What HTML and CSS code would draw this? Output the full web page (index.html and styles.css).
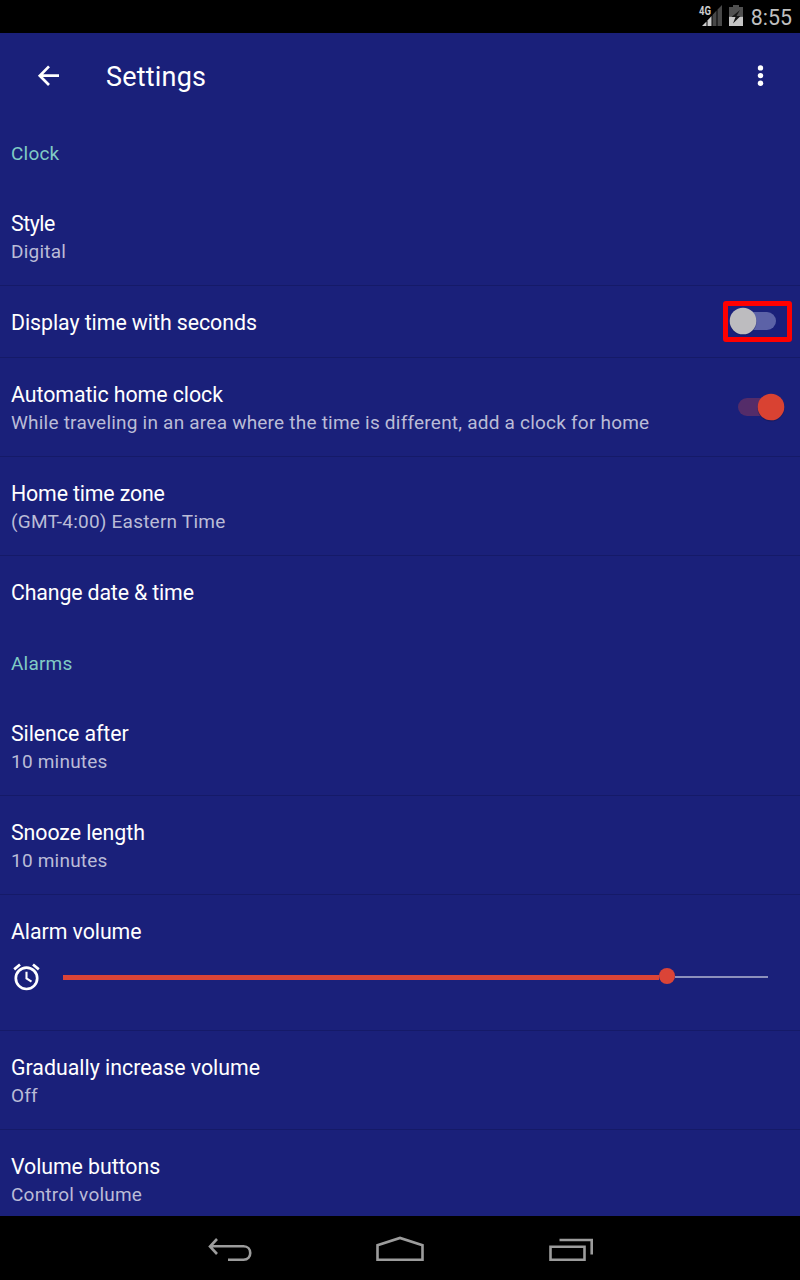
FILE: index.html
```
<!DOCTYPE html>
<html lang="en">
<head>
<meta charset="utf-8">
<title>Settings</title>
<link rel="stylesheet" href="styles.css">
</head>
<body>
<div class="screen">
  <div class="status">
    <svg class="signal" width="26" height="24" viewBox="0 0 26 24">
      <path d="M4 22L8.500 17.500V22z" fill="#ccc"/><path d="M9.500 16.500L13.500 12V22h-4z" fill="#ccc"/>
      <path d="M14.500 11L18.500 6.500V22h-4zM19.500 5.500L24 1v21h-4.500z" fill="#484848"/>
      <text x="1" y="11" class="net" textLength="12" lengthAdjust="spacingAndGlyphs">4G</text>
    </svg>
    <svg class="battery" width="14" height="21" viewBox="0 0 14 21">
      <path d="M4 0h6v2h4v9H0V2h4z" fill="#505050"/><path d="M0 11.500h14v9.500H0z" fill="#c6c6c6"/>
      <path d="M11 5L2.500 12h4L4 18.500 11.500 11h-4z" fill="#161616"/>
    </svg>
    <span class="time">8:55</span>
  </div>
  <header class="bar">
    <svg class="back" width="24" height="24" viewBox="0 0 24 24" fill="none" stroke="#fff" stroke-width="2.700"><path d="M13 2.400L3.800 11.700l9.200 9.300M3.500 11.700H23"/></svg>
    <h1>Settings</h1>
    <svg class="more" width="8" height="24" viewBox="0 0 8 24" fill="#fff"><circle cx="4.500" cy="3.900" r="2.700"/><circle cx="4.500" cy="11.600" r="2.700"/><circle cx="4.500" cy="19.300" r="2.700"/></svg>
  </header>
  <main class="list">
    <h2 class="category">Clock</h2>
    <div class="row"><div class="title short">Style</div><div class="sub">Digital</div></div>
    <div class="row single"><div class="title">Display time with seconds</div>
      <div class="marker"></div>
      <svg class="switch off" width="54" height="36" viewBox="0 0 54 36"><rect x="4" y="9" width="46" height="18" rx="9" fill="#5c62a7"/><circle cx="17" cy="19" r="13.500" fill="#10164f" opacity=".4"/><circle cx="17" cy="18" r="13.300" fill="#bdbcbf"/></svg>
    </div>
    <div class="row"><div class="title">Automatic home clock</div><div class="sub">While traveling in an area where the time is different, add a clock for home</div>
      <svg class="switch on" width="54" height="36" viewBox="0 0 54 36"><rect x="4" y="9" width="46" height="18" rx="9" fill="#542c69"/><circle cx="37" cy="19" r="13.500" fill="#10164f" opacity=".5"/><circle cx="37" cy="18" r="13.300" fill="#d94232"/></svg>
    </div>
    <div class="row"><div class="title tight">Home time zone</div><div class="sub">(GMT-4:00) Eastern Time</div></div>
    <div class="row single last"><div class="title tight">Change date &amp; time</div></div>
    <h2 class="category">Alarms</h2>
    <div class="row"><div class="title">Silence after</div><div class="sub">10 minutes</div></div>
    <div class="row"><div class="title">Snooze length</div><div class="sub">10 minutes</div></div>
    <div class="row volume"><div class="title">Alarm volume</div>
      <div class="slider">
        <svg width="28" height="28" viewBox="0 0 28 28" fill="none" stroke="#fff"><circle cx="14.500" cy="15.300" r="10.700" stroke-width="2.700"/><path d="M14.500 8.700v6.800l5 3.200" stroke-width="2.100"/><path d="M2.200 6.400L8 1.500M21 1.500l5.800 4.900" stroke-width="2.700"/></svg>
        <div class="track"><div class="fill"></div><div class="thumb"></div><div class="rest"></div></div>
      </div>
    </div>
    <div class="row"><div class="title wide">Gradually increase volume</div><div class="sub">Off</div></div>
    <div class="row"><div class="title">Volume buttons</div><div class="sub">Control volume</div></div>
  </main>
  <nav class="nav">
    <svg width="46" height="28" viewBox="0 0 46 28"><path d="M10 3L3 10.500l7 7.500M3 10.300h33.500c9 0 9 13.500 0 13.500H21"/></svg>
    <svg width="50" height="28" viewBox="0 0 50 28"><path d="M2.500 23.800V9.200L25 1.900l22.500 7.300v14.600z"/></svg>
    <svg width="46" height="28" viewBox="0 0 46 28"><path d="M3.500 10.800h34v13h-34zM12.500 4h32.200v14.500"/></svg>
  </nav>
</div>
</body>
</html>
```
FILE: styles.css
```
* { box-sizing: border-box; }
body { margin: 0; background: #000; font-family: Roboto, sans-serif; }
.screen { width: 800px; height: 1280px; display: flex; flex-direction: column; overflow: hidden; background: #1a207a; color: #fff; }
.status { height: 33px; flex: none; background: #000; display: flex; align-items: flex-start; justify-content: flex-end; padding: 0 8px 0 0; }
.signal { margin: 4px 5px 0 0; }
.battery { margin: 5px 8px 0 0; }
.net { font: bold 12.5px Roboto, sans-serif; fill: #ccc; stroke: #000; stroke-width: 2px; paint-order: stroke; }
.time { font-size: 21.33px; line-height: 35px; color: #c0c0c0; }
.bar { height: 85px; flex: none; display: flex; align-items: center; padding: 0 36px 0 36px; }
.bar h1 { margin: 3px auto 0 46px; font-weight: 400; font-size: 27px; line-height: 34px; letter-spacing: .2px; }
.list { flex: 1; overflow: hidden; }
.category { margin: 0; height: 69px; padding: 21px 11px 0; font-size: 19px; line-height: 30px; font-weight: 400; color: #80cbc4; letter-spacing: .2px; }
.row { position: relative; height: 99px; padding: 23px 11px 0; border-bottom: 1px solid #151a68; }
.single { height: 72px; }
.last { border-bottom: 0; }
.title { font-size: 21.33px; line-height: 27px; letter-spacing: -.06px; }
.title.short { letter-spacing: -.5px; }
.title.tight { letter-spacing: -.15px; }
.title.wide { letter-spacing: 0; }
.sub { font-size: 19px; line-height: 29px; color: #babcd7; letter-spacing: .22px; }
.switch { position: absolute; left: 726px; top: 17px; }
.switch.on { left: 734px; top: 31px; }
.marker { position: absolute; left: 723px; top: 15px; width: 69px; height: 41px; border: 5px solid #f00; border-radius: 3px; }
.volume { height: 136px; }
.slider { display: flex; align-items: center; height: 28px; margin: 18px 21px 0 1px; }
.track { flex: 1; display: flex; align-items: center; margin-left: 23px; }
.fill { width: 596px; height: 5px; background: #db4437; }
.thumb { width: 16px; height: 16px; margin-bottom: 2px; border-radius: 50%; background: #db4437; }
.rest { flex: 1; height: 2px; background: #8c90bc; }
.nav { height: 64px; flex: none; background: #000; display: flex; justify-content: center; gap: 122px; padding-top: 20px; }
.nav svg { fill: none; stroke: #9c9c9c; stroke-width: 2.6; }
```
